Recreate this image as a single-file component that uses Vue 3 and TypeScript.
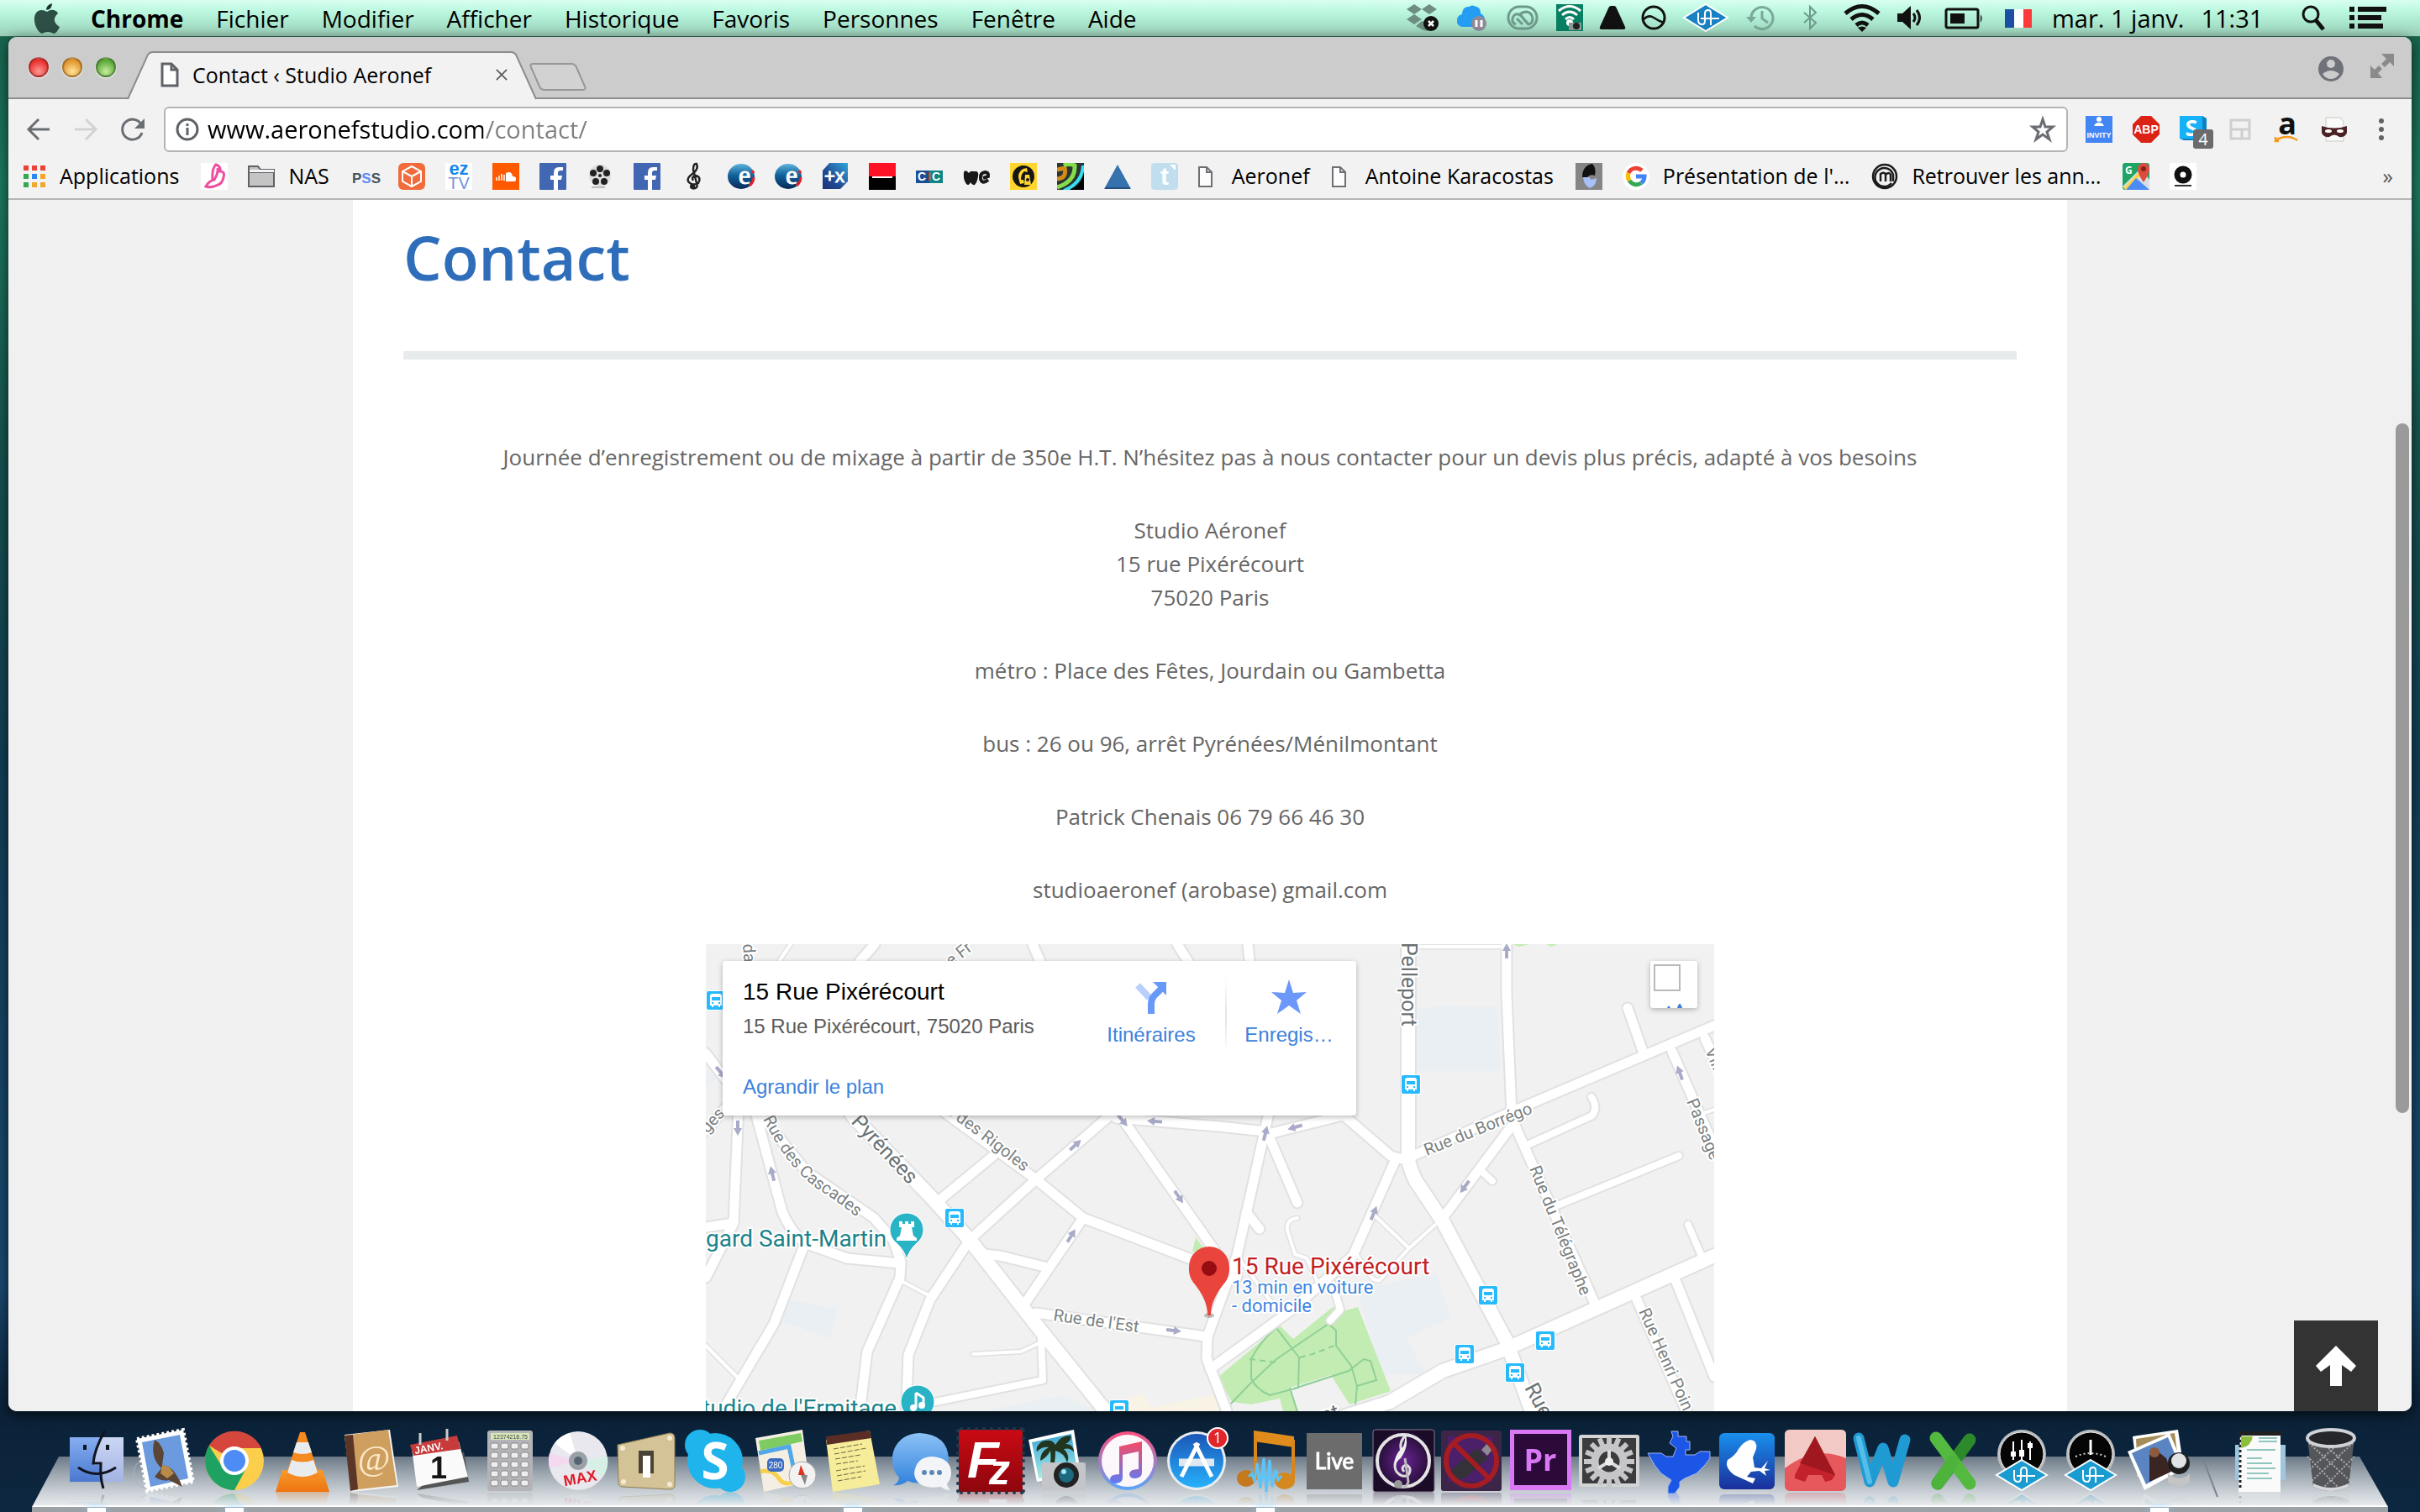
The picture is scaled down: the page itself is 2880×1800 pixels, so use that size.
<script setup lang="ts">
interface Glyph { w: number; art: string; label: string }
interface Bookmark { label?: string; title: string; w: number; art: string }
interface DockItem { title: string; art: string; running?: boolean }
interface MapLabel { text: string; x: number; y: number; turn: number; cls: string }

const menus = ['Fichier', 'Modifier', 'Afficher', 'Historique', 'Favoris', 'Personnes', 'Fenêtre', 'Aide']

const ua = (cx: number, cy: number, rx: number, ry: number, fill: string) =>
  `<path d="M${cx} ${cy - ry}L${cx + rx} ${cy}L${cx} ${cy + ry}L${cx - rx} ${cy}Z" fill="${fill}" stroke="#fff" stroke-width="2"/>
   <path d="M${cx - 9} ${cy - 6}V${cy + 3}Q${cx - 9} ${cy + 8} ${cx - 4} ${cy + 8}Q${cx - 1} ${cy + 8} ${cx - 1} ${cy + 3}V${cy - 5}Q${cx - 1} ${cy - 9} ${cx + 3} ${cy - 9}Q${cx + 6} ${cy - 9} ${cx + 6} ${cy - 5}V${cy + 9}M${cx - 6} ${cy + 1}H${cx + 16}" fill="none" stroke="#fff" stroke-width="2"/>`

const status: Glyph[] = [
  { w: 40, label: 'Dropbox', art: `<g fill="#6e8e82"><path d="M11 0l9 6-9 6-9-6zM29 0l9 6-9 6-9-6zM11 12l9 6-9 6-9-6zM20 20l8 4v8l-6-1-9-5z"/></g><circle cx="31" cy="23" r="9" fill="#111"/><path d="M28 20l6 6m0-6l-6 6" stroke="#fff" stroke-width="2.5"/>` },
  { w: 40, label: 'Nuage', art: `<path d="M8 27Q1 26 2 18Q3 13 8 12Q8 3 16 3Q20 0 25 3Q30 4 30 11Q36 14 35 21Q34 27 28 27Z" fill="#249df3"/><circle cx="28" cy="23" r="9" fill="#8f8a96"/><path d="M25 19v8m6-8v8" stroke="#fff" stroke-width="3"/>` },
  { w: 40, label: 'Creative Cloud', art: `<g fill="none" stroke="#6f9a8b" stroke-width="3"><rect x="3" y="3" width="34" height="26" rx="13"/><path d="M12 24Q7 22 8 17Q10 11 15 12Q18 13 21 17L27 24Q32 23 32 17Q31 10 25 9Q20 9 17 12L24 21M13 17L20 24"/></g>` },
  { w: 32, label: 'AirServer', art: `<rect width="32" height="32" fill="#087f62"/><g fill="none" stroke="#fff" stroke-width="3"><path d="M3 8Q16-3 29 8M7 13Q16 5 25 13M11 18Q16 13 21 18"/></g><circle cx="16" cy="22" r="4" fill="#fff"/><rect x="15" y="22" width="15" height="9" fill="#8c9a95"/><circle cx="24" cy="26" r="4" fill="#222"/>` },
  { w: 30, label: 'Drive', art: `<path d="M13 2h4q2 0 3 3l10 22q1 3-2 3H2q-3 0-2-3L10 5q1-3 3-3z" fill="#111"/>` },
  { w: 28, label: 'Synchronisation', art: `<circle cx="14" cy="16" r="13" fill="none" stroke="#111" stroke-width="3"/><path d="M2 18Q8 12 14 16T26 22" fill="none" stroke="#111" stroke-width="2.5"/>` },
  { w: 56, label: 'Universal Audio', art: ua(28, 16, 26, 16, '#1781c4') },
  { w: 36, label: 'Time Machine', art: `<g fill="none" stroke="#7aa899" stroke-width="3"><path d="M6 16A13 13 0 1 1 10 26"/><path d="M19 8v9l7 5"/></g><path d="M0 15h12l-6 7z" fill="#7aa899"/>` },
  { w: 40, label: 'Bluetooth', art: `<path d="M13 10L27 22L20 29V3L27 10L13 22" fill="none" stroke="#6d9b8b" stroke-width="2"/>` },
  { w: 44, label: 'Wi-Fi', art: `<g fill="none" stroke="#111" stroke-width="5"><path d="M2 11Q22-6 42 11M9 18Q22 7 35 18M15 25Q22 19 29 25"/></g><path d="M17 28q5-3 10 0l-5 5z" fill="#111"/>` },
  { w: 32, label: 'Volume', art: `<path d="M0 11h6l10-9v28l-10-9H0z" fill="#111"/><path d="M19 11q4 5 0 10M23 7q7 9 0 18" fill="none" stroke="#111" stroke-width="3"/>` },
  { w: 52, label: 'Batterie', art: `<rect x="6" y="6" width="38" height="22" rx="2" fill="none" stroke="#111" stroke-width="3"/><rect x="11" y="11" width="17" height="12" fill="#111"/><path d="M47 12q3 5 0 10z" fill="#111"/>` },
  { w: 40, label: 'Français', art: `<rect x="4" y="6" width="11" height="22" fill="#1c4fa3"/><rect x="15" y="6" width="11" height="22" fill="#fff"/><rect x="26" y="6" width="10" height="22" fill="#fb3b3b"/>` },
]

const sans = 'font-family="Liberation Sans, sans-serif"'
const docArt = `<path d="M1 5h9l6 6v17H1zM10 5v6h6" fill="#fdfdfd" stroke="#6c7075" stroke-width="2"/>`
const fbArt = `<rect width="32" height="32" rx="1" fill="#4267b2"/><path d="M22 32V20h4l1-5h-5v-3q0-3 3-3h3V5h-5q-6 0-6 7v3h-4v5h4v12z" fill="#fff"/>`
const eArt = (id: string) => `<defs><linearGradient id="${id}" x1="0" y1="0" x2="0" y2="1"><stop offset="0" stop-color="#5db4dc"/><stop offset=".45" stop-color="#13619a"/><stop offset="1" stop-color="#062a58"/></linearGradient></defs><ellipse cx="16" cy="16" rx="16" ry="15" fill="url(#${id})"/><text x="13" y="25" font-size="32" fill="#fff" stroke="#fff" font-family="Liberation Serif, serif">e</text><path d="M29 9l2 3M31 17q0 6-5 10" stroke="#e3212c" stroke-width="3" fill="none"/>`

const bookmarks: Bookmark[] = [
  { title: 'Applications', label: 'Applications', w: 28, art: `<path d="M1 3h6v6H1zM11 3h6v6h-6zM21 3h6v6h-6z" fill="#ea4335"/><path d="M1 13h6v6H1z" fill="#34a853"/><path d="M11 13h6v6h-6z" fill="#2b86f5"/><path d="M21 13h6v6h-6z" fill="#f5a623"/><path d="M1 23h6v6H1z" fill="#34a853"/><path d="M11 23h6v6h-6zM21 23h6v6h-6z" fill="#f0a92b"/>` },
  { title: 'Papillon', w: 32, art: `<rect width="32" height="32" fill="#fff"/><path d="M14 20Q13 6 18 2Q24 4 23 10Q29 10 27 17Q26 25 18 27Q12 30 6 28Q10 21 16 20Q21 12 20 6" fill="none" stroke="#ee4fa0" stroke-width="3"/>` },
  { title: 'NAS', label: 'NAS', w: 32, art: `<path d="M1 4h11l3 4h16v20H1z" fill="#c4c4c4" stroke="#5f6368" stroke-width="2"/><path d="M1 11h30" stroke="#5f6368" stroke-width="2"/><path d="M2 8h29v3H2z" fill="#f4f4f4"/>` },
  { title: 'PSS', w: 32, art: `<text x="1" y="24" font-size="17" font-weight="700" fill="#4a545c" ${sans}>P<tspan fill="#5b8df6">S</tspan>S</text>` },
  { title: 'Popcorn', w: 32, art: `<rect width="32" height="32" rx="6" fill="#f16b3c"/><path d="M16 4l11 6v12l-11 6-11-6V10zM5 10l11 6 11-6M16 16v12" fill="none" stroke="#fff" stroke-width="2"/>` },
  { title: 'EZTV', w: 32, art: `<rect width="32" height="32" fill="#fff"/><text x="16" y="14" font-size="22" font-weight="700" fill="#1587e8" text-anchor="middle" ${sans}>ez</text><text x="16" y="31" font-size="20" fill="#6e94dd" text-anchor="middle" ${sans}>TV</text>` },
  { title: 'SoundCloud', w: 32, art: `<rect width="32" height="32" fill="#ff5a00"/><path d="M5 17v4m3-6v6m3-8v8m3-7v7" stroke="#fff" stroke-width="1.5"/><path d="M16 12q7-3 8 4 5 0 4 4 0 2-2 2H16z" fill="#fff"/>` },
  { title: 'Facebook', w: 32, art: fbArt },
  { title: 'Bobine', w: 32, art: `<circle cx="16" cy="15" r="13" fill="#ddd"/><circle cx="16" cy="15" r="2" fill="#222"/><g fill="#222"><circle cx="16" cy="7" r="4"/><circle cx="24" cy="12" r="4"/><circle cx="21" cy="22" r="4"/><circle cx="11" cy="22" r="4"/><circle cx="8" cy="12" r="4"/></g><path d="M6 29h16" stroke="#bbb" stroke-width="2"/>` },
  { title: 'Facebook', w: 32, art: fbArt },
  { title: 'Musique', w: 32, art: `<path d="M20 28Q15 33 12 28M20 28L15 8Q15 0 19 1Q22 7 14 13Q7 18 9 22Q14 28 21 24Q25 17 18 15Q12 17 15 21" fill="none" stroke="#222" stroke-width="2.5"/><circle cx="14" cy="28" r="3" fill="#222"/>` },
  { title: 'e', w: 32, art: eArt('globe1') },
  { title: 'e', w: 32, art: eArt('globe2') },
  { title: '+X', w: 32, art: `<defs><linearGradient id="plusx" x1="1" y1="0" x2="0" y2="1"><stop offset="0" stop-color="#2fa8dc"/><stop offset=".6" stop-color="#204a94"/><stop offset="1" stop-color="#1f3178"/></linearGradient></defs><path d="M9 0h22v22l-9 9H1V9z" fill="url(#plusx)"/><text x="15" y="23" font-size="22" fill="#fff" stroke="#fff" text-anchor="middle" ${sans}>+x</text>` },
  { title: 'Société Générale', w: 32, art: `<path d="M0 0h32v16H0z" fill="#ff1126"/><path d="M0 16h32v16H0z" fill="#000"/><path d="M4 17h24" stroke="#fff" stroke-width="2"/>` },
  { title: 'CIC', w: 32, art: `<rect y="9" width="16" height="15" fill="#1b4f95"/><rect x="16" y="9" width="16" height="15" fill="#0d8583"/><text x="2" y="21" font-size="14" font-weight="700" fill="#fff" ${sans}>C</text><text x="14" y="21" font-size="14" font-weight="700" fill="#f0421c" ${sans}>I</text><text x="19" y="21" font-size="14" font-weight="700" fill="#fff" ${sans}>C</text>` },
  { title: 'WeTransfer', w: 32, art: `<path d="M1 11q1-3 4-1l2 2q2-3 5-2h4q3 1 2 6-1 7-4 10-3 1-5-3-2 5-5 2-4-5-3-14z" fill="#181818"/><path d="M30 20q-7 6-9-1-1-7 5-8 5 0 4 5l-6 2" fill="none" stroke="#181818" stroke-width="4"/>` },
  { title: 'Annuaire', w: 32, art: `<rect width="32" height="32" fill="#ffd52e"/><circle cx="16" cy="16" r="13" fill="#161616"/><path d="M20 6Q10 7 10 17l2 8 5-1-1-4h-3q0-7 4-10l4 1z" fill="#ffd52e"/><path d="M18 14h5l2 12h-8z" fill="#ffd52e"/><circle cx="21" cy="20" r="2" fill="#161616"/>` },
  { title: 'Orbite', w: 32, art: `<defs><clipPath id="orb"><path d="M0 0h32v32H0z"/></clipPath></defs><g clip-path="url(#orb)"><path d="M0 0h32v32H0z" fill="#2a3634"/><path d="M14 32Q32 26 32 8V32z" fill="#020202"/><g fill="none" stroke-width="5"><path d="M0 19Q12 18 9 6L0 8" stroke="#d38a17"/><path d="M0 29Q22 22 21 3Q14 0 8 3" stroke="#86dd4b"/><path d="M8 33Q30 24 31 3" stroke="#36e0f4" stroke-width="4"/></g></g>` },
  { title: 'Delta', w: 32, art: `<path d="M16 2l16 29H0z" fill="#3672ad"/><path d="M1 30h30" stroke="#24507c" stroke-width="2"/>` },
  { title: 't', w: 32, art: `<rect width="32" height="32" rx="4" fill="#c0deed"/><text x="16" y="26" font-size="30" font-weight="700" fill="#fff" text-anchor="middle" ${sans}>t</text><path d="M22 2h7v7z" fill="#fff"/>` },
  { title: 'Aeronef', label: 'Aeronef', w: 24, art: docArt },
  { title: 'Antoine Karacostas', label: 'Antoine Karacostas', w: 24, art: docArt },
  { title: 'Oiseau', w: 32, art: `<rect width="32" height="32" fill="#858585"/><path d="M20 1Q8 3 8 17h6q3-4 9-2Q25 6 20 1z" fill="#111"/><path d="M9 17h7l3 3 6-2q0 9-8 12-7-3-8-13z" fill="#a9c0f8"/>` },
  { title: 'Google', label: "Présentation de l'…", w: 32, art: `<circle cx="16" cy="16" r="16" fill="#fff"/><g fill="none" stroke-width="5"><path d="M23 9A10 10 0 0 0 7 12" stroke="#ea4335"/><path d="M7 12A10 10 0 0 0 8 21" stroke="#fbbc05"/><path d="M8 21A10 10 0 0 0 22 24" stroke="#34a853"/><path d="M22 24A10 10 0 0 0 26 16H16" stroke="#4285f4"/></g>` },
  { title: 'Meetic', label: 'Retrouver les ann…', w: 32, art: `<g fill="none" stroke="#1c1c1c" stroke-width="2.5"><circle cx="16" cy="16" r="14"/><path d="M24 24A11 11 0 1 1 26 14v8"/><path d="M11 22v-9q5-3 6 1v8m0-8q4-4 6 0v8"/></g>` },
  { title: 'Google Maps', w: 32, art: `<rect width="32" height="32" rx="3" fill="#1fa463"/><path d="M0 28L22 6 32 20v12H4z" fill="#d7dee4"/><path d="M1 30L20 10l3 4L5 32z" fill="#ffd44a"/><path d="M16 18L32 32H4z" fill="#4c8bf5"/><path d="M18 7a7 7 0 0 1 14 0q0 6-7 16-7-10-7-16z" fill="#dd4b3e"/><circle cx="25" cy="7" r="3" fill="#7f231c"/><text x="3" y="13" font-size="12" font-weight="700" fill="#fff">G</text>` },
  { title: 'Studiotime', w: 32, art: `<rect width="32" height="32" fill="#fff"/><circle cx="16" cy="14" r="7" fill="none" stroke="#111" stroke-width="7"/><path d="M6 27h20" stroke="#333" stroke-width="2"/>` },
]

const extensions: Bookmark[] = [
  { title: 'Invity', w: 32, art: `<rect width="32" height="32" fill="#4285f4"/><circle cx="16" cy="4" r="3" fill="#fff"/><path d="M10 12q1-3 4-4h4q3 1 4 4z" fill="#fff"/><text x="16" y="26" font-size="9" font-weight="700" fill="#fff" text-anchor="middle" ${sans}>INVITY</text>` },
  { title: 'Adblock Plus', w: 32, art: `<path d="M10 0h12l10 10v12l-10 10H10L0 22V10z" fill="#dc2115"/><text x="16" y="21" font-size="14" font-weight="700" fill="#fff" text-anchor="middle" ${sans}>ABP</text>` },
  { title: 'Skype', w: 40, art: `<path d="M0 3l5-3h22l5 3v26H5l-5-2z" fill="#0b82c4"/><rect width="27" height="27" fill="#17b1f7"/><text x="14" y="24" font-size="27" font-weight="700" fill="#fff" text-anchor="middle" font-family="Open Sans, sans-serif">S</text><rect x="16" y="16" width="24" height="23" rx="3" fill="#6b6b6b"/><text x="28" y="35" font-size="20" fill="#fff" text-anchor="middle" font-family="Open Sans, sans-serif">4</text>` },
  { title: 'Panneaux', w: 32, art: `<path d="M5 5h22v22H5zM5 16h22M18 16v11" fill="none" stroke="#cfcfcf" stroke-width="3"/>` },
  { title: 'Amazon', w: 32, art: `<text x="16" y="22" font-size="36" font-weight="700" fill="#111" text-anchor="middle" font-family="Open Sans, sans-serif">a</text><path d="M2 29Q16 21 28 29M2 25v5h4" fill="none" stroke="#f79a1c" stroke-width="2.5"/>` },
  { title: 'Masque', w: 32, art: `<path d="M6 2h17l4 5v23H6z" fill="#fafafa" stroke="#c9c9bb"/><path d="M1 12q15 5 30 0v8q-2 6-9 5-6-5-12 0-7 1-9-5z" fill="#4c2323"/><ellipse cx="9" cy="18" rx="4" ry="2" fill="#fff"/><ellipse cx="23" cy="18" rx="4" ry="2" fill="#fff"/>` },
]

const keys = [0, 1, 2, 3, 4].map(r => [0, 1, 2, 3].map(c => `<rect x="${18 + c * 12}" y="${20 + r * 11}" width="9" height="7" rx="2" fill="#eee" stroke="#888"/>`).join('')).join('')
const perf = Array.from({ length: 9 }, (_, i) => `<circle cx="${5 + i * 9}" cy="3" r="2"/><circle cx="${5 + i * 9}" cy="79" r="2"/><circle cx="1" cy="${5 + i * 9}" r="2"/><circle cx="79" cy="${5 + i * 9}" r="2"/>`).join('')
const teeth = Array.from({ length: 16 }, (_, i) => `<rect x="37" y="12" width="6" height="10" transform="rotate(${i * 22.5} 40 42)"/>`).join('')
const meter = (inner: string) => `<circle cx="40" cy="33" r="29" fill="#b9bcbf"/><circle cx="40" cy="33" r="26" fill="#050505" stroke="#eee"/>${inner}${ua(40, 58, 30, 18, '#1b9cd0')}`
const fade = (id: string, from: string, to: string) => `<defs><linearGradient id="${id}" x1="0" y1="0" x2="0" y2="1"><stop offset="0" stop-color="${from}"/><stop offset="1" stop-color="${to}"/></linearGradient></defs>`

const dock: DockItem[] = [
  { title: 'Finder', running: true, art: `${fade('fi', '#86aef0', '#4a78cf')}${fade('fi2', '#ccd6f4', '#a3b4e4')}<rect x="8" y="13" width="64" height="53" fill="url(#fi)"/><path d="M47 13h25v53H46q-1-10-1-20h-8q2-20 10-33z" fill="url(#fi2)"/><path d="M50 5Q37 28 36 44h9q-1 18 3 30M18 49Q40 64 63 49" fill="none" stroke="#101420" stroke-width="3"/><path d="M26 22v6M53 22v6" stroke="#101420" stroke-width="4"/>` },
  { title: 'Mail', art: `<circle cx="20" cy="56" r="18" fill="none" stroke="#a5b2c2"/><path d="M6 15L61 4L73 66L18 77z" fill="#fff" stroke="#fff" stroke-width="4" stroke-dasharray="3 3"/><path d="M12 19L57 10L67 62L22 72z" fill="#6b9ade"/><path d="M27 16q8 4 11 16l-2 14 8 2q10 8 16 24l-8-4-8-4q-8 2-17-4l8-10q-14-14-8-34z" fill="#5b4534"/><path d="M36 46l8 2 6 8-8 6-8-6z" fill="#b98b4a"/>` },
  { title: 'Chrome', running: true, art: `<circle cx="40" cy="41" r="35" fill="#fbcf4b"/><path d="M40 41L10 23A35 35 0 0 1 72 26H40z" fill="#d5473c"/><path d="M10 23A35 35 0 0 0 40 76L54 50 40 41 24 46z" fill="#1fa261"/><circle cx="40" cy="41" r="17" fill="#fff"/><circle cx="40" cy="41" r="13" fill="#4e8cf5"/>` },
  { title: 'VLC', art: `${fade('vl', '#f79a2a', '#ee7412')}<path d="M16 52h48l8 26H8z" fill="url(#vl)"/><path d="M37 7h6l17 52q-20 12-40 0z" fill="#f58a20"/><path d="M33 19h14l4 12q-11 4-22 0zM27 40q13 5 26 0l5 15q-18 10-36 0z" fill="#e9ecef"/>` },
  { title: 'Contacts', art: `<path d="M8 10L62 4l10 68-56 6z" fill="#f5f5f5"/><path d="M8 11L60 4l10 66-54 6z" fill="#cf9f60"/><path d="M8 11l10-1 6 65-9 2z" fill="#5b3526"/><text x="43" y="52" font-size="42" fill="#fbe9c8" text-anchor="middle" font-family="Liberation Serif, serif">@</text>` },
  { title: 'Calendrier', art: `<path d="M12 76L74 66 68 30z" fill="#555"/><path d="M6 26L62 18 73 60 12 72z" fill="#fafafa"/><path d="M4 22L60 11l4 16L8 35z" fill="#c73b3b"/><path d="M16 8v14M48 3v14" stroke="#ccc" stroke-width="3"/><text x="10" y="33" font-size="12" font-weight="700" fill="#fff" transform="rotate(-10 10 33)" ${sans}>JANV.</text><text x="38" y="62" font-size="36" font-weight="700" fill="#151515" text-anchor="middle" ${sans}>1</text>` },
  { title: 'Calculette', art: `<rect x="14" y="5" width="54" height="72" rx="3" fill="#b4b4b8"/><rect x="18" y="8" width="46" height="8" fill="#d6e8b8"/><text x="62" y="15" font-size="7" fill="#444" text-anchor="end" ${sans}>12374218.75</text>${keys}` },
  { title: 'DVD', art: `<circle cx="40" cy="41" r="35" fill="#e8e8ee"/><path d="M40 41L12 20A35 35 0 0 1 30 8z" fill="#fff"/><path d="M40 41L75 36A35 35 0 0 1 70 60z" fill="#d7f0e5"/><path d="M40 41L6 50A35 35 0 0 1 6 32z" fill="#f4d9f0"/><circle cx="40" cy="41" r="11" fill="#99a0a8"/><circle cx="40" cy="41" r="5" fill="#566471"/><text x="23" y="70" font-size="18" font-weight="700" fill="#e21b26" transform="rotate(-10 30 66)" ${sans}>MAX</text>` },
  { title: 'Interrupteur', art: `<path d="M6 22L68 8q6 0 6 6v56q0 5-6 5L12 72q-5 0-5-6z" fill="#d3c396" stroke="#8c7c55"/><rect x="31" y="29" width="18" height="27" fill="#4a4436"/><rect x="36" y="35" width="9" height="26" fill="#fff"/><g fill="#f4ecd2"><circle cx="12" cy="26" r="3"/><circle cx="68" cy="14" r="3"/><circle cx="13" cy="66" r="3"/><circle cx="68" cy="69" r="3"/></g>` },
  { title: 'Skype', art: `<circle cx="40" cy="41" r="33" fill="#1fb4ec"/><circle cx="22" cy="22" r="18" fill="#1fb4ec"/><circle cx="58" cy="60" r="18" fill="#1fb4ec"/><text x="40" y="63" font-size="60" font-weight="700" fill="#fff" text-anchor="middle" font-family="Open Sans, sans-serif">S</text>` },
  { title: 'Plans', art: `<path d="M6 14L62 4l8 62-54 12z" fill="#f4efe2"/><path d="M10 17L60 8l2 10-50 11z" fill="#7ecb62"/><path d="M10 32l36-8 10 48" fill="none" stroke="#52a7e6" stroke-width="5"/><path d="M12 54q14-4 22 8t24 0" fill="none" stroke="#f8d04e" stroke-width="5"/><rect x="20" y="38" width="20" height="16" rx="5" fill="#3c6cc0"/><text x="30" y="50" font-size="10" fill="#fff" text-anchor="middle" ${sans}>280</text><circle cx="62" cy="58" r="16" fill="#f2f2f2" stroke="#aaa"/><path d="M60 46l5 12h-8z" fill="#d32"/><path d="M65 70l-5-12h8z" fill="#888"/>` },
  { title: 'Notes', running: true, art: `<path d="M8 16L60 5l12 64L16 78z" fill="#f6ec9a"/><path d="M8 12L60 5l2 9L9 22z" fill="#5a2d25"/><g stroke="#6d6741" fill="none" stroke-dasharray="6 2"><path d="M17 27l34-6M18 33l38-7M19 39l30-5M20 45l26-4M20 53l34-6M21 59l34-6M22 65l28-5"/></g>` },
  { title: 'Messages', art: `${fade('ms', '#8cc2f6', '#3182dd')}<path d="M38 8C18 8 5 22 5 39q0 14 8 22-1 7-7 9 11 1 17-5 7 3 15 3 32-2 34-29Q71 10 38 8z" fill="url(#ms)"/><path d="M53 36q22 2 22 20-1 9-5 12 1 6 4 8-7 0-11-4-30 4-32-16 2-20 22-20z" fill="#f2f4f8"/><g fill="#5f86b5"><circle cx="43" cy="55" r="3"/><circle cx="52" cy="55" r="3"/><circle cx="61" cy="55" r="3"/></g>` },
  { title: 'FileZilla', art: `${fade('fz', '#c90a14', '#8e060d')}<rect x="2" y="4" width="76" height="74" fill="url(#fz)"/><g fill="#24384d">${perf}</g><text x="12" y="61" font-size="62" font-weight="700" font-style="italic" fill="#fff" ${sans}>F</text><text x="38" y="69" font-size="50" font-weight="700" font-style="italic" fill="#fff" ${sans}>z</text>` },
  { title: 'iPhoto', art: `${fade('ip', '#3aa4d6', '#a8ece4')}<path d="M4 16L58 4l8 52-52 10z" fill="#fff"/><path d="M8 19L55 9l7 44-46 9z" fill="url(#ip)"/><path d="M36 22q-4-8-16-4-8 6-6 12 6-6 14-5-10 5-10 16 8-4 12-12 2 16-4 28l6-2q4-10 4-26 10 2 14 14 4-8-4-16 8-2 12 4 0-10-10-10 8-4 6-10-12 0-18 11z" fill="#22361f"/><rect x="20" y="43" width="52" height="33" rx="3" fill="#c3c5c8"/><circle cx="49" cy="58" r="15" fill="#222"/><circle cx="49" cy="58" r="9" fill="#1b6a80"/><circle cx="46" cy="54" r="3" fill="#9ee6f0"/>` },
  { title: 'iTunes', art: `${fade('it', '#fb4f7c', '#5aa6fa')}${fade('it2', '#f84a62', '#5c7cf6')}<circle cx="40" cy="41" r="35" fill="url(#it)"/><circle cx="40" cy="41" r="31" fill="#fbf7fb"/><path d="M30 24l27-6v37q0 6-8 7-7 0-7-5 0-6 11-6V30l-19 4v27q0 6-8 7-7 0-7-5 0-6 11-6z" fill="url(#it2)"/>` },
  { title: 'App Store', art: `${fade('as', '#1b56b8', '#27b1fb')}<circle cx="40" cy="41" r="35" fill="#e8edf2"/><circle cx="40" cy="41" r="32" fill="url(#as)"/><path d="M19 43h42" stroke="#dfe8f2" stroke-width="9"/><path d="M22 60L42 20M58 60L38 20" stroke="#fff" stroke-width="5"/><circle cx="65" cy="14" r="12" fill="#e0262b" stroke="#fff" stroke-width="2"/><text x="65" y="20" font-size="18" fill="#fff" text-anchor="middle" font-family="Open Sans, sans-serif">1</text>` },
  { title: 'Audio', running: true, art: `<path d="M26 5l48 7v13L26 18z" fill="#e08c1d"/><path d="M28 10v54M73 16v48" stroke="#d9861a" stroke-width="4"/><ellipse cx="17" cy="62" rx="11" ry="10" fill="#c5781d"/><ellipse cx="63" cy="65" rx="12" ry="10" fill="#d58820"/><path d="M20 60l4-4 3 10 3-22 4 30 4-36 3 40 4-38 3 32 4-20 3 12 4-5" fill="none" stroke="#5cc4f8" stroke-width="3"/>` },
  { title: 'Live', art: `<rect x="7" y="8" width="66" height="67" fill="#6c6c6c"/><text x="40" y="51" font-size="26" fill="#fff" stroke="#fff" text-anchor="middle" font-family="Lato, sans-serif">Live</text>` },
  { title: 'Clef', art: `<defs><radialGradient id="cl"><stop offset="0" stop-color="#6a2396"/><stop offset="1" stop-color="#1a0b26"/></radialGradient></defs><rect x="4" y="4" width="73" height="74" rx="3" fill="url(#cl)" stroke="#85788c"/><circle cx="40" cy="41" r="31" fill="none" stroke="#e4e4e4" stroke-width="4"/><path d="M44 10Q34 18 38 30Q26 44 32 54Q39 62 46 58Q51 50 44 46Q36 48 41 54" fill="none" stroke="#ddd" stroke-width="3"/><path d="M42 8q6 14-5 30-6 4-6 10-4-12 9-24 3-8 2-16z" fill="#eee"/><path d="M42 38l4 28q-2 8-10 6" fill="none" stroke="#bbb" stroke-width="3"/><circle cx="34" cy="69" r="5" fill="#999"/>` },
  { title: 'USB', art: `<rect x="4" y="5" width="72" height="72" rx="3" fill="#3c2547"/><rect x="12" y="12" width="54" height="54" fill="#4c1f6b"/><path d="M20 64L16 52 46 26l14 12-28 24z" fill="#343238"/><path d="M52 28l8-9 7 6-8 10z" fill="#8b8a8f"/><circle cx="40" cy="41" r="30" fill="none" stroke="#a51c22" stroke-width="6"/><path d="M19 20l42 42" stroke="#a51c22" stroke-width="6"/>` },
  { title: 'Premiere Pro', art: `<rect x="4" y="4" width="73" height="72" fill="#d977f5"/><rect x="9" y="9" width="63" height="61" fill="#2b0a3a"/><text x="40" y="53" font-size="36" font-weight="700" fill="#d977f5" text-anchor="middle" font-family="Open Sans, sans-serif">Pr</text>` },
  { title: 'Préférences', art: `<rect x="4" y="10" width="72" height="62" rx="3" fill="#d4d4d4"/><rect x="8" y="14" width="64" height="54" fill="#3c3c3e"/><g fill="#c6c6c8">${teeth}</g><circle cx="40" cy="42" r="17" fill="none" stroke="#c6c6c8" stroke-width="9"/><path d="M40 42V28M40 42L27 50M40 42l13 8" stroke="#ddd" stroke-width="4"/><circle cx="40" cy="42" r="5" fill="#eee"/>` },
  { title: 'Oiseau', art: `<path d="M32 6h8v6h10v6h4v10h-5v6h11l6-4h12v8l-6 8-10 10-14 6-6 4v6l-6 8h-8v-8l4-8-12-8-8-10-8-14h16l6 4h8l4-10-8-6 4-8z" fill="#1c56e6" stroke="#9db7f6"/>` },
  { title: 'Grenouille', art: `${fade('gr', '#1a90ee', '#1a2f9a')}<rect x="7" y="8" width="66" height="67" rx="6" fill="url(#gr)"/><path d="M44 16q9 1 7 11l-4 10 2 12 8 1 8-9-4 9 7 2-7 1 2 6-8-6-10 1-5 6 10 2-3 6-22-10q-12-9-8-18 9-5 13-13 6-9 14-11z" fill="#fff"/>` },
  { title: 'AutoCAD', art: `<rect x="4" y="4" width="73" height="73" rx="6" fill="#e7585c"/><path d="M10 4h61q6 0 6 6v28Q40 22 4 50V10q0-6 6-6z" fill="#f3c9c6"/><path d="M40 12l24 46-4 6-8 2-4-8H32l-4 8-12-4v-4z" fill="#c4222a"/><path d="M40 12l24 46-42-14z" fill="#9f1820"/>` },
  { title: 'Word', art: `<path d="M10 14l13 52 16-40 12 40 14-50" fill="none" stroke="#1f9ad3" stroke-width="13" stroke-linejoin="round" stroke-linecap="round"/><path d="M10 14l13 52" stroke="#55bde9" stroke-width="6" stroke-linecap="round"/>` },
  { title: 'Excel', art: `<path d="M60 16L22 68" stroke="#2d8a2a" stroke-width="15" stroke-linecap="round"/><path d="M20 14L60 68" stroke="#54ba3f" stroke-width="15" stroke-linecap="round"/><path d="M40 42L22 68" stroke="#4db33b" stroke-width="15" stroke-linecap="round"/>` },
  { title: 'Console', art: meter(`<path d="M30 18v22M40 16v24M50 18v22" stroke="#fff" stroke-width="2"/><path d="M27 30h6v6h-6zM37 28h6v8h-6zM47 20h6v6h-6z" fill="#fff"/>`) },
  { title: 'Mesure', art: meter(`<path d="M22 36q18-8 36 0" fill="none" stroke="#ccc" stroke-width="2" stroke-dasharray="2 3"/><path d="M40 34V16" stroke="#fff" stroke-width="3"/>`) },
  { title: 'Aperçu', running: true, art: `<path d="M8 12L62 4l6 40L14 60z" fill="#fff"/><path d="M12 15L58 8l4 30-48 16z" fill="#a48d58"/><path d="M2 30L52 8l18 42L22 76z" fill="#fff"/><path d="M7 32L50 13l14 34-40 22z" fill="#5a84c2"/><path d="M28 34l10-4 10 8 6 16-26 12z" fill="#3b2523"/><circle cx="34" cy="31" r="6" fill="#8d5a3e"/><path d="M50 56q14 12 26 0v10q-12 10-26 0z" fill="#c4c4c4"/><circle cx="63" cy="44" r="13" fill="#1e1e1e"/><circle cx="63" cy="41" r="9" fill="#dfe3e6"/>` },
]

const dockEnd: DockItem[] = [
  { title: 'Documents', art: `<path d="M8 22h60v42H8z" fill="#9fc6de"/><path d="M14 8h48v70H12z" fill="#fafafa"/><path d="M13 6h50v5H13z" fill="#202020"/><path d="M14 10v66" stroke="#222" stroke-width="3" stroke-dasharray="3 3"/><path d="M15 12h14q-2 12-14 14z" fill="#8bbf3c"/><path d="M36 14h22M36 18h22M22 28h34M22 38h18M22 44h30M22 50h34M22 56h26M22 62h30" stroke="#8fc7bf" stroke-width="2"/>` },
  { title: 'Corbeille', art: `<path d="M12 14l7 58q21 10 42 0l7-58z" fill="#55565a"/><path d="M14 20l50 46M12 36l40 40M28 18l38 34M66 20L16 66M68 36L28 76M52 18L14 52" stroke="#a9abb0" stroke-width="2" stroke-dasharray="2 2"/><ellipse cx="40" cy="14" rx="28" ry="10" fill="#26272b" stroke="#cfd1d6" stroke-width="4"/><path d="M19 68q21 10 42 0v4q-21 10-42 0z" fill="#d5d7db"/>` },
]

const wideRoads = [
  'M120 130L178 208L267 300L314 352L401 463L476 556', 'M836 0V256Q838 268 845 282L877 330L952 471L999 600',
  'M1200 371L1059 434L952 482L877 508L814 545L730 572',
]
const roads = [
  'M39 190L33 332L0 337M33 332L0 397', 'M58 196L91 319Q102 344 118 356L168 374L231 380M118 356L81 452L26 545L10 580',
  'M69 208L120 271L200 326L223 352L232 378L231 397L192 485L178 600', 'M270 190L393 280L449 326L575 374L632 396',
  'M490 196L393 280L314 352L267 423L241 489L237 600', 'M279 304L342 252', 'M449 326L381 426', 'M330 369L350 371L403 384',
  'M393 439L595 467', 'M490 200L610 371', 'M488 207L610 217L667 223', 'M201 0L182 22', 'M389 0L402 30', 'M561 0L580 30', 'M0 130L24 162', 'M0 222L24 194',
  'M953 0V60L959 204L966 223L1059 430', 'M837 254L960 199L1200 97', 'M960 215L877 326', 'M750 196L815 252L836 258M758 204L669 226L704 308',
  'M671 196L632 371L597 467L596 493L620 556', 'M600 506L695 437L770 371L821 256', 'M645 0L648 30', 'M1097 76L1116 130', 'M1150 128L1210 264', 'M1189 112L1200 136',
  'M1108 423L1173 570', 'M1154 400L1200 515', 'M643 319L659 339',
]
const lanes = [
  'M399 471L401 519L273 545', 'M980 238L1055 204Q1062 194 1054 182', 'M924 271L936 282', 'M1011 312L1158 252', 'M1169 334L1187 376', 'M746 405L755 435L743 448',
]
const thinRoads = [
  'M399 474L375 485L318 488', 'M231 400L267 419', 'M0 478L37 515', 'M101 0L88 19', 'M704 326Q690 328 692 340L701 369L715 374L727 400', 'M632 371L679 434',
  'M798 325L837 362L868 334M837 362L802 400Q796 402 790 394L776 371', 'M845 3H948', 'M1185 202L1200 197',
]
const buses = [[12, 67], [296, 326], [492, 554], [839, 167], [931, 418], [999, 472], [903, 488], [963, 510]]
const arrows = [
  [38, 219, 180], [79, 273, -14], [440, 239, 48], [435, 347, 32], [496, 210, 140], [534, 211, -86], [563, 301, 146], [557, 460, 96], [18, 153, 140],
  [953, 8, 0], [666, 225, 14], [701, 218, -106], [795, 320, 22], [903, 289, 216], [1159, 153, -20],
]
const labels: MapLabel[] = [
  { text: 'Pyrénées', x: 172, y: 212, turn: 47, cls: 'big' },
  { text: "Rue de l'Est", x: 413, y: 448, turn: 8, cls: 'small' },
  { text: 'Rue du Borrégo', x: 858, y: 252, turn: -22, cls: 'small' },
  { text: 'Rue du Télégraphe', x: 980, y: 267, turn: 68, cls: 'small' },
  { text: 'Passage', x: 1167, y: 187, turn: 68, cls: 'small' },
  { text: 'Villa', x: 1189, y: 126, turn: 68, cls: 'small' },
  { text: 'Rue Henri Poin', x: 1110, y: 437, turn: 66, cls: 'small' },
  { text: 'Rue', x: 974, y: 528, turn: 62, cls: 'big' },
  { text: 'Pelleport', x: 828, y: -2, turn: 90, cls: 'big' },
  { text: 'da', x: 44, y: 0, turn: 86, cls: 'small' },
  { text: 'e Fr', x: 292, y: 27, turn: -38, cls: 'small' },
  { text: 'ges', x: 2, y: 226, turn: -48, cls: 'small' },
  { text: 'nt', x: 734, y: 570, turn: -16, cls: 'big' },
]
</script>

<template>
  <div class="desktop">
    <header class="menubar">
      <button class="apple" aria-label="Pomme">
        <svg viewBox="0 0 32 36" width="32" height="36"><path d="M16 10Q20 7 24 8Q28 9 29 12Q24 16 25 21Q26 25 31 28Q28 35 24 36Q20 34 17 34Q13 34 10 36Q5 34 2 26Q-1 15 4 10Q9 6 16 10z" fill="#2d4f45" /><path d="M15 8Q15 2 22 0Q22 7 15 8z" fill="#17332b" /></svg>
      </button>
      <nav class="menus">
        <button class="strong">Chrome</button>
        <button v-for="m in menus" :key="m">{{ m }}</button>
      </nav>
      <div class="status">
        <svg v-for="s in status" :key="s.label" :width="s.w" height="34" :viewBox="`0 0 ${s.w} 34`" role="img" :aria-label="s.label" v-html="s.art" />
        <time class="clock"><span>mar. 1 janv.</span><span>11:31</span></time>
        <svg width="30" height="34" viewBox="0 0 30 34" role="img" aria-label="Recherche"><circle cx="12" cy="12" r="9" fill="none" stroke="#111" stroke-width="3" /><path d="M18 19l9 11" stroke="#111" stroke-width="5" /></svg>
        <svg class="list" width="44" height="34" viewBox="0 0 44 34" role="img" aria-label="Notifications"><path d="M10 6h34M10 16h28M10 26h30" stroke="#111" stroke-width="6" /><path d="M0 6h6M0 16h6M0 26h6" stroke="#111" stroke-width="6" /></svg>
      </div>
    </header>

    <section class="window">
      <div class="tabstrip">
        <div class="lights">
          <button class="light red" aria-label="Fermer" /><button class="light amber" aria-label="Réduire" /><button class="light green" aria-label="Agrandir" />
        </div>
        <div class="tab">
          <svg class="tabshape" viewBox="0 0 486 57" preserveAspectRatio="none"><path d="M0 57L24 4Q26 1 30 1H456Q460 1 462 4L486 57" fill="#f2f2f2" stroke="#8d8d8d" stroke-width="2" /></svg>
          <svg width="22" height="30" viewBox="0 0 22 30"><path d="M2 2h11l7 7v19H2zM13 2v7h7" fill="#fff" stroke="#5f6368" stroke-width="3" /></svg>
          <span class="tabtitle">Contact ‹ Studio Aeronef</span>
          <button class="close" aria-label="Fermer l'onglet"><svg width="14" height="14" viewBox="0 0 16 16"><path d="M1 1l14 14M15 1L1 15" stroke="#5a5a5a" stroke-width="2" /></svg></button>
        </div>
        <button class="newtab" aria-label="Nouvel onglet"><svg width="68" height="34" viewBox="0 0 68 34"><path d="M4 1H50Q54 1 56 5L66 28Q68 32 63 32H18Q14 32 12 28L2 5Q0 1 4 1z" fill="#d2d2d2" stroke="#979797" stroke-width="2" /></svg></button>
        <span class="grow" />
        <svg class="user" width="32" height="32" viewBox="0 0 32 32"><circle cx="16" cy="16" r="15" fill="#6f7379" /><circle cx="16" cy="10" r="5" fill="#ccc" /><path d="M6 22Q16 14 26 22Q22 28 16 28T6 22z" fill="#ccc" /></svg>
        <svg class="full" width="30" height="30" viewBox="0 0 30 30"><path d="M14 0h15v15l-5-5-6 6-4-4 6-6zM1 29V14l5 5 5-5 4 4-5 5 5 6z" fill="#8a8a8a" /></svg>
      </div>

      <div class="toolbar">
        <button aria-label="Retour"><svg width="28" height="28" viewBox="0 0 28 28"><path d="M27 14H3M14 2L2 14l12 12" fill="none" stroke="#6a6e73" stroke-width="3" /></svg></button>
        <button aria-label="Avancer"><svg width="28" height="28" viewBox="0 0 28 28"><path d="M1 14h24M14 2l12 12-12 12" fill="none" stroke="#d3d3d3" stroke-width="3" /></svg></button>
        <button aria-label="Actualiser"><svg width="28" height="28" viewBox="0 0 28 28"><path d="M24 8A12 12 0 1 0 25 18" fill="none" stroke="#6a6e73" stroke-width="3" /><path d="M28 1v12H16z" fill="#6a6e73" /></svg></button>
        <div class="omnibox">
          <svg width="28" height="28" viewBox="0 0 28 28"><circle cx="14" cy="14" r="12" fill="none" stroke="#5f6368" stroke-width="3" /><path d="M14 12v9M14 7v3" stroke="#5f6368" stroke-width="3" /></svg>
          <input class="url" type="text" aria-label="Adresse" value="www.aeronefstudio.com/contact/">
          <svg width="32" height="32" viewBox="0 0 32 32"><path d="M16 4l3 9h9l-7 6 3 9-8-6-8 6 3-9-7-6h9z" fill="none" stroke="#6a6e73" stroke-width="3" /></svg>
        </div>
        <div class="extensions">
          <button v-for="e in extensions" :key="e.title" :aria-label="e.title"><svg width="32" height="32" viewBox="0 0 32 32" v-html="e.art" /></button>
          <button aria-label="Menu"><svg width="8" height="28" viewBox="0 0 8 28"><g fill="#5f6368"><circle cx="4" cy="4" r="3" /><circle cx="4" cy="14" r="3" /><circle cx="4" cy="24" r="3" /></g></svg></button>
        </div>
      </div>

      <nav class="bookmarks">
        <a v-for="(b, i) in bookmarks" :key="i" href="#" :class="{ labelled: b.label }" :aria-label="b.title"><svg :width="b.w" height="32" :viewBox="`0 0 ${b.w} 32`" v-html="b.art" /><span v-if="b.label">{{ b.label }}</span></a>
        <button class="more" aria-label="Autres favoris">»</button>
      </nav>

      <div class="viewport">
        <main class="page">
          <h1>Contact</h1>
          <hr>
          <div class="info">
            <p>Journée d’enregistrement ou de mixage à partir de 350e H.T. N’hésitez pas à nous contacter pour un devis plus précis, adapté à vos besoins</p>
            <p>Studio Aéronef<br>15 rue Pixérécourt<br>75020 Paris</p>
            <p>métro : Place des Fêtes, Jourdain ou Gambetta</p>
            <p>bus : 26 ou 96, arrêt Pyrénées/Ménilmontant</p>
            <p>Patrick Chenais 06 79 66 46 30</p>
            <p>studioaeronef (arobase) gmail.com</p>
          </div>
          <div class="map">
            <svg class="canvas" viewBox="0 0 1200 600" role="img" aria-label="Plan du quartier">
              <rect width="1200" height="600" fill="#f1f1f1" />
              <g fill="#eaeff3"><path d="M845 77L875 74L943 75L945 151H845z" /><path d="M774 411L869 393L887 445L833 469L857 511L806 513z" /><path d="M101 424L158 434L148 469L87 448z" /><path d="M0 150L14 160L0 168zM330 556L420 538L470 556z" /></g>
              <path d="M461 556L520 535L532 552L610 535V600H461z" fill="#f8f3e4" />
              <path d="M610 515L683 454L699 470L746 432L758 437L776 432L815 532L766 548L744 513L695 528L710 570L691 570L683 541L649 548L626 545zM583 349L579 366L597 368zM960 0L968 3L980 0zM1000 0L1006 3L1014 0z" fill="#c3ecb2" />
              <g fill="none" stroke="#8fcf98" stroke-width="2"><path d="M624 548L647 524L679 494L741 452L750 460V478L768 502L775 526L773 548M679 457L699 483L706 492L705 528L671 537Q655 530 649 517V494Q660 472 679 457M695 528L705 560M700 529L765 508L783 494L791 496L798 519L775 526" /><path d="M647 494L680 498M707 492L722 488L748 478" stroke-dasharray="7 5" /></g>
              <g fill="none" stroke="#e1e1e1" stroke-linecap="round" stroke-linejoin="round">
                <path v-for="(d, i) in thinRoads" :key="'ct' + i" :d="d" stroke-width="7" /><path v-for="(d, i) in lanes" :key="'cl' + i" :d="d" stroke-width="12" /><path v-for="(d, i) in roads" :key="'cr' + i" :d="d" stroke-width="15" /><path v-for="(d, i) in wideRoads" :key="'cw' + i" :d="d" stroke-width="20" />
              </g>
              <g fill="none" stroke="#fff" stroke-linecap="round" stroke-linejoin="round">
                <path v-for="(d, i) in thinRoads" :key="'t' + i" :d="d" stroke-width="4" /><path v-for="(d, i) in lanes" :key="'l' + i" :d="d" stroke-width="8" /><path v-for="(d, i) in roads" :key="'r' + i" :d="d" stroke-width="11" /><path v-for="(d, i) in wideRoads" :key="'w' + i" :d="d" stroke-width="16" />
              </g>
              <g fill="#a9abc8"><path v-for="(a, i) in arrows" :key="'a' + i" d="M0-9L5 0H2V9H-2V0H-5z" :transform="`translate(${a[0]} ${a[1]}) rotate(${a[2]})`" /></g>
              <path id="cascades" d="M68 208Q98 268 134 292Q165 311 192 336" fill="none" />
              <path id="rigoles" d="M284 200L320 226L400 288" fill="none" />
              <text class="lbl small"><textPath href="#cascades">Rue des Cascades</textPath></text>
              <text class="lbl small"><textPath href="#rigoles">e des Rigoles</textPath></text>
              <text v-for="l in labels" :key="l.text" :class="['lbl', l.cls]" :transform="`translate(${l.x} ${l.y}) rotate(${l.turn})`">{{ l.text }}</text>
              <g v-for="(b, i) in buses" :key="'b' + i" :transform="`translate(${b[0]} ${b[1]})`">
                <rect x="-12" y="-12" width="24" height="24" rx="3" fill="#fff" /><rect x="-11" y="-11" width="22" height="22" rx="2" fill="#27baff" /><path d="M-7-5Q-7-8-4-8H4Q7-8 7-5V6H5V8H3V6H-3V8H-5V6H-7zM-5-4V0H5V-4zM-5 2V4H-3V2zM3 2V4H5V2z" fill="#fff" fill-rule="evenodd" />
              </g>
              <text class="lbl poi" x="0" y="360">gard Saint-Martin</text>
              <text class="lbl poi" x="-4" y="562">tudio de l'Ermitage</text>
              <g fill="#29b4c6" stroke="#fff" stroke-width="1"><path d="M239 375Q236 364 227 356A20 20 0 1 1 251 356Q242 364 239 375z" /><path d="M252 580Q249 568 240 561A20 20 0 1 1 264 561Q255 568 252 580z" /></g>
              <path d="M230 330h4v3h3v-3h4v3h3v-3h4v7h-3l2 10 4 3v3h-24v-3l4-3 2-10h-3z" fill="#fff" /><path d="M250 534l9 6v8M250 534v18" fill="none" stroke="#fff" stroke-width="3" /><circle cx="247" cy="552" r="4" fill="#fff" /><circle cx="257" cy="549" r="4" fill="#fff" />
              <ellipse cx="599" cy="442" rx="6" ry="3" fill="#bbb" /><path d="M597 441Q597 424 582 405Q574 396 575 384A24 24 0 0 1 623 384Q624 396 616 405Q601 424 601 441Q599 444 597 441z" fill="#ea453d" /><circle cx="599" cy="386" r="9" fill="#960c10" />
              <text class="lbl place" x="626" y="393">15 Rue Pixérécourt</text>
              <text class="lbl trip" x="626" y="416">13 min en voiture</text>
              <text class="lbl trip" x="626" y="438">- domicile</text>
            </svg>
            <aside class="card">
              <div class="cardtext">
                <strong>15 Rue Pixérécourt</strong>
                <span>15 Rue Pixérécourt, 75020 Paris</span>
                <a href="#">Agrandir le plan</a>
              </div>
              <a href="#" class="action"><svg width="42" height="42" viewBox="0 0 42 42"><path d="M5 7l14 15" stroke="#b8d0fb" stroke-width="8" /><path d="M21 41V29Q21 22 27 17L33 11" fill="none" stroke="#6699f8" stroke-width="8" /><path d="M23 3h16v16z" fill="#6699f8" /></svg>Itinéraires</a>
              <i class="rule" />
              <a href="#" class="action"><svg width="42" height="42" viewBox="0 0 42 42"><path d="M21 0l5 16 16-1-12 10 5 16-14-10L7 41l5-16L0 15l16 1z" fill="#6b98f9" /></svg>Enregis…</a>
            </aside>
            <label class="layer"><input type="checkbox" aria-label="Calque"><svg width="30" height="6" viewBox="0 0 30 6"><path d="M0 6q2-5 4 0zM12 6q3-10 6 0z" fill="#3a80dc" /></svg></label>
          </div>
        </main>
        <span class="scrollbar" />
        <button class="totop" aria-label="Haut de page"><svg width="50" height="50" viewBox="0 0 50 50"><path d="M25 1L49 25L43 32L32 24V49H18V24L7 32L1 25z" fill="#fff" /></svg></button>
      </div>
    </section>

    <footer class="dock">
      <div class="shelf" />
      <div class="front" />
      <ul>
        <li v-for="d in dock" :key="d.title" :class="{ running: d.running }"><svg width="80" height="80" viewBox="0 0 80 80" role="img" :aria-label="d.title" v-html="d.art" /></li>
        <li class="sep"><svg width="20" height="44" viewBox="0 0 20 44"><path d="M2 0L18 42" stroke="#7b848c" stroke-width="2" /></svg></li>
        <li v-for="d in dockEnd" :key="d.title"><svg width="80" height="80" viewBox="0 0 80 80" role="img" :aria-label="d.title" v-html="d.art" /></li>
      </ul>
    </footer>
  </div>
</template>

<style>
body { margin: 0; }
</style>

<style scoped>
* { box-sizing: border-box; }
button { border: 0; padding: 0; background: none; font: inherit; color: inherit; display: flex; align-items: center; }
a { color: inherit; text-decoration: none; }
svg { display: block; flex: none; overflow: visible; }
.desktop { height: 100vh; display: flex; flex-direction: column; overflow: hidden; font-family: "Open Sans", "Noto Sans", sans-serif; color: #000; background: linear-gradient(#16604a 0, #1d7a60 12%, #17544f 30%, #123f56 50%, #1a4a72 85%, #0b2238 93%, #0d2740 100%); }
.menubar { flex: none; height: 44px; display: flex; align-items: center; padding: 0 40px; font-size: 28px; line-height: 40px; border-bottom: 1px solid #2f6f58; background: linear-gradient(#d8fff1 0, #bdf8e0 30%, #a9e5cc 65%, #9bcfb8 100%); }
.apple { width: 32px; margin-right: 36px; }
.menus { display: flex; gap: 39px; flex: 1; }
.strong { font-weight: 700; }
.status { display: flex; align-items: center; gap: 20px; }
.clock { display: flex; gap: 20px; width: 276px; font-size: 29px; white-space: nowrap; }
.list { margin-left: 8px; }
.window { flex: 1; min-height: 0; display: flex; flex-direction: column; margin: 0 10px; border-radius: 10px; overflow: hidden; background: #f2f2f2; box-shadow: 0 4px 16px #000a; }
.tabstrip { flex: none; height: 74px; display: flex; align-items: flex-end; background: #ccc; border-bottom: 2px solid #8f8f8f; }
.lights { display: flex; gap: 16px; padding: 0 28px 24px 24px; }
.light { width: 24px; height: 24px; border-radius: 50%; border: 2px solid #0004; box-shadow: 0 1px 2px #fff; }
.red { background: radial-gradient(circle at 50% 75%, #ff9a94, #e8332f 70%); }
.amber { background: radial-gradient(circle at 50% 75%, #ffe59a, #e2952f 70%); }
.green { background: radial-gradient(circle at 50% 75%, #c5f09d, #5fa83c 70%); }
.tab { position: relative; width: 486px; height: 57px; margin: 0 -8px -2px -14px; padding: 0 34px 2px 39px; display: flex; align-items: center; font-size: 25px; }
.tabshape { position: absolute; inset: 0; width: 100%; height: 100%; }
.tab > :not(.tabshape) { position: relative; }
.tabtitle { flex: 1; margin-left: 16px; white-space: nowrap; }
.newtab { padding-bottom: 7px; }
.grow { flex: 1; }
.user { margin: 0 30px 18px 0; }
.full { margin: 0 20px 22px 0; }
.toolbar { flex: none; height: 72px; display: flex; align-items: center; gap: 28px; padding: 0 32px 0 22px; }
.omnibox { flex: 1; height: 54px; margin-left: -5px; padding: 0 12px; display: flex; align-items: center; gap: 10px; background: #fff; border: 2px solid #b4b4b4; border-radius: 6px; }
.url { flex: 1; min-width: 0; border: 0; padding: 0; outline: 0; font: 29px/40px "Open Sans", sans-serif; color: transparent; background: linear-gradient(90deg, #000 328px, #808080 328px); background-clip: text; -webkit-background-clip: text; }
.extensions { display: flex; align-items: center; gap: 24px; margin-left: -7px; }
.extensions button:last-child { margin-left: 12px; }
.bookmarks { flex: none; height: 48px; display: flex; align-items: flex-start; gap: 24px; padding: 4px 22px 0 17px; font-size: 25px; line-height: 30px; white-space: nowrap; border-bottom: 2px solid #b6b6b6; }
.bookmarks a { display: flex; align-items: center; gap: 16px; height: 32px; }
.bookmarks span { padding-bottom: 2px; }
.bookmarks .labelled { padding-right: 2px; }
.more { margin-left: auto; color: #555; }
.viewport { position: relative; flex: 1; min-height: 0; overflow: hidden; background: #f0f0f0; }
.page { max-width: 2040px; margin: 0 auto; padding: 20px 60px 0; background: #fff; color: #666; }
h1 { margin: 0; font-size: 72px; line-height: 96px; font-weight: 600; color: #2e6dba; }
hr { height: 10px; margin: 64px 0 96px; border: 0; background: #e7ebec; }
.info { display: flex; flex-direction: column; gap: 47px; text-align: center; font-size: 26px; line-height: 40px; }
p { margin: 0; }
.map { position: relative; max-width: 1200px; margin: 45px auto 0; font-family: "Liberation Sans", Arial, sans-serif; }
.canvas { width: 100%; height: auto; overflow: hidden; }
.lbl { font-family: Roboto, sans-serif; paint-order: stroke; stroke: #fff; stroke-width: 4px; stroke-linejoin: round; }
.small { font-size: 20px; fill: #7b8182; }
.big { font-size: 25px; fill: #6a7273; }
.poi { font-size: 28px; fill: #1a838b; }
.place { font-size: 28px; fill: #c3201f; }
.trip { font-size: 22px; fill: #3f86dd; }
.card { position: absolute; top: 20px; left: 20px; width: 754px; height: 184px; display: flex; align-items: flex-start; background: #fff; border-radius: 4px; box-shadow: 0 2px 6px #0004; font-size: 24px; color: #3c82dc; }
.cardtext { flex: 1; display: flex; flex-direction: column; padding: 20px 0 0 24px; line-height: 36px; white-space: nowrap; }
.cardtext strong { font-size: 28px; font-weight: 400; line-height: 34px; color: #000; }
.cardtext span { color: #5b5b5b; line-height: 48px; }
.cardtext a { margin-top: 32px; line-height: 32px; }
.action { width: 160px; padding-top: 22px; display: flex; flex-direction: column; align-items: center; gap: 10px; line-height: 28px; }
.rule { width: 2px; height: 90px; margin: 20px -6px 0 8px; background: linear-gradient(#fff, #e2e2e2, #fff); }
.layer { position: absolute; top: 20px; right: 20px; width: 56px; height: 56px; padding: 4px 4px 0; background: #fff; border-radius: 3px; box-shadow: 0 2px 6px #0004; overflow: hidden; }
.layer input { appearance: none; display: block; width: 32px; height: 32px; margin: 0; border: 2px solid #b9b9b9; background: #fff; }
.layer svg { margin: 14px 0 0 16px; }
.scrollbar { position: absolute; right: 3px; top: calc(18% + 6px); height: 57%; width: 16px; border-radius: 8px; background: #9a9a9a; }
.totop { position: absolute; right: 40px; bottom: 0; width: 100px; height: 108px; justify-content: center; background: #333; }
.dock { flex: none; position: relative; height: 120px; }
.shelf { position: absolute; left: 38px; right: 38px; top: 54px; height: 60px; clip-path: polygon(32px 0, calc(100% - 34px) 0, 100% 100%, 0 100%); background: linear-gradient(#6c7986, #9ea8b1 35%, #cfd5da 75%, #e6e9ec 96%, #fff 97%); }
.front { position: absolute; left: 38px; right: 38px; bottom: 0; height: 6px; background: #9da2a7; }
ul { position: relative; display: grid; grid-template-columns: repeat(31, 1fr) 0.5fr repeat(2, 1fr); margin: 0; padding: 18px 65px 0 74px; list-style: none; }
li { height: 102px; display: flex; flex-direction: column; align-items: center; justify-content: space-between; min-width: 0; }
li svg { -webkit-box-reflect: below -4px linear-gradient(transparent 78%, #fff5); }
.sep { padding-top: 42px; }
.sep svg { -webkit-box-reflect: unset; }
.running::after { content: ""; width: 22px; height: 5px; background: #fff; box-shadow: 0 0 8px #8fd0ff; }
</style>
